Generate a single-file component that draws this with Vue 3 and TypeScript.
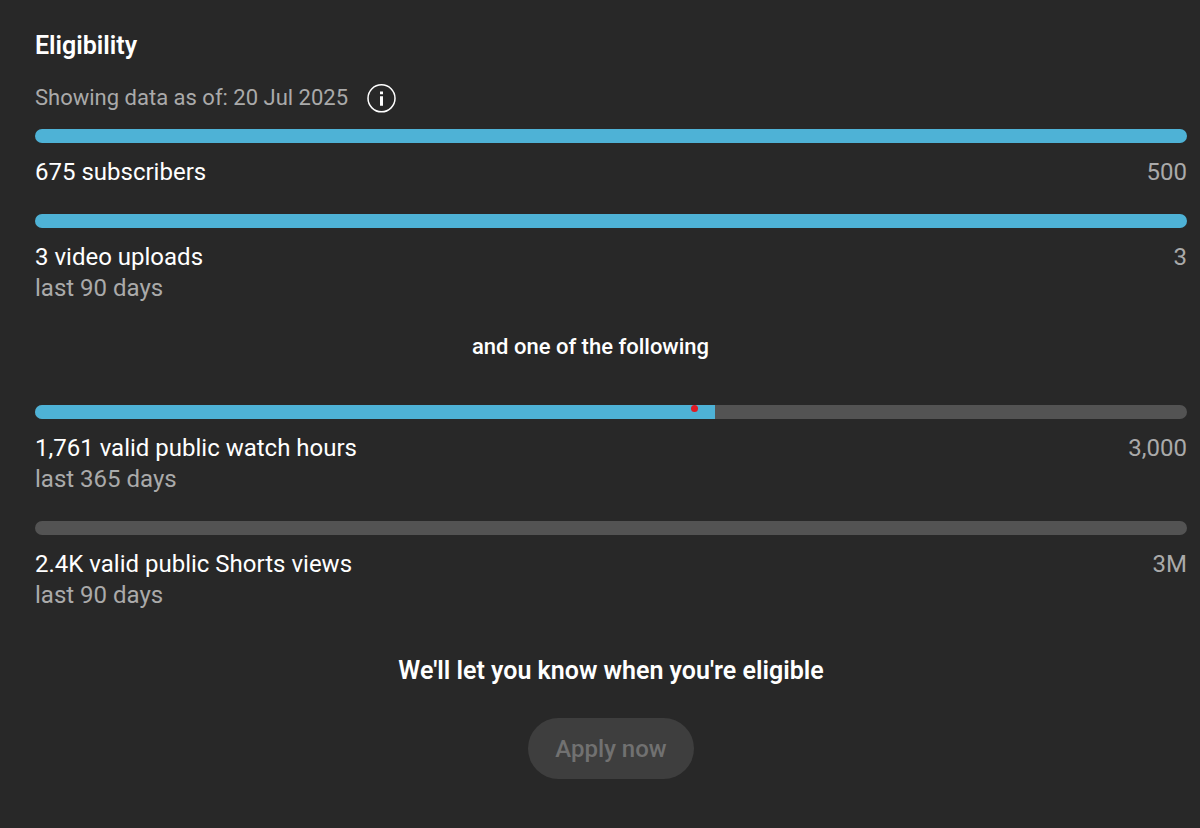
<script setup lang="ts">
interface Goal {
  id: string
  label: string
  period?: string
  target: string
  percent: number
  marker?: number
}

const required: Goal[] = [
  { id: 'subs', label: '675 subscribers', target: '500', percent: 100 },
  { id: 'uploads', label: '3 video uploads', period: 'last 90 days', target: '3', percent: 100 },
]

const alternatives: Goal[] = [
  { id: 'hours', label: '1,761 valid public watch hours', period: 'last 365 days', target: '3,000', percent: 59, marker: 57.2 },
  { id: 'shorts', label: '2.4K valid public Shorts views', period: 'last 90 days', target: '3M', percent: 0 },
]
</script>

<template>
  <main class="panel">
    <h1 class="title">Eligibility</h1>
    <div class="asof">
      <span>Showing data as of: 20 Jul 2025</span>
      <button class="info" type="button" aria-label="More information">
        <svg viewBox="0 0 30 30" width="30" height="30" aria-hidden="true">
          <circle cx="15.5" cy="15.3" r="13.5" fill="none" stroke="#fff" stroke-width="1.5" />
          <path d="M14 8.5h3v2.7h-3zM14 13.3h3v9.4h-3z" fill="#fff" />
        </svg>
      </button>
    </div>

    <section class="goals">
      <div v-for="g in required" :key="g.id" class="goal">
        <div class="track"><div class="fill" :style="{ width: g.percent + '%' }"></div></div>
        <div class="row"><span>{{ g.label }}</span><span class="muted">{{ g.target }}</span></div>
        <div v-if="g.period" class="muted">{{ g.period }}</div>
      </div>
    </section>

    <h2 class="divider">and one of the following</h2>

    <section class="goals">
      <div v-for="g in alternatives" :key="g.id" class="goal">
        <div class="track">
          <div class="fill" :style="{ width: g.percent + '%' }"></div>
          <span v-if="g.marker" class="marker" :style="{ left: g.marker + '%' }"></span>
        </div>
        <div class="row"><span>{{ g.label }}</span><span class="muted">{{ g.target }}</span></div>
        <div v-if="g.period" class="muted">{{ g.period }}</div>
      </div>
    </section>

    <footer class="footer">
      <h2 class="notice">We'll let you know when you're eligible</h2>
      <button class="apply" type="button" disabled>Apply now</button>
    </footer>
  </main>
</template>

<style>
body {
  margin: 0;
  background: #282828;
}
</style>

<style scoped>
.panel {
  box-sizing: border-box;
  min-height: 100vh;
  padding: 30px 13px 48px 35px;
  background: #282828;
  color: #fff;
  font-family: Roboto, 'Liberation Sans', sans-serif;
  font-size: 24px;
  line-height: 31px;
}

.title,
.divider,
.notice {
  margin: 0;
  font-weight: 600;
}

.title,
.notice {
  font-size: 25px;
  line-height: 32px;
}

.asof {
  display: flex;
  align-items: flex-start;
  gap: 18px;
  margin: 20px 0 16px;
  color: #aaa;
  font-size: 22px;
  line-height: 31px;
}

.info {
  width: 30px;
  height: 30px;
  margin-top: 1px;
  padding: 0;
  border: 0;
  background: none;
}

.info svg {
  display: block;
}

.goals {
  display: flex;
  flex-direction: column;
  gap: 26px;
}

.track {
  position: relative;
  height: 14px;
  margin-bottom: 14px;
  border-radius: 7px;
  background: #535353;
  overflow: hidden;
}

.fill {
  height: 100%;
  background: #4eb2d6;
}

.marker {
  position: absolute;
  top: 0;
  width: 7px;
  height: 7px;
  margin-left: -3px;
  border-radius: 50%;
  background: #e01b24;
}

.row {
  display: flex;
  justify-content: space-between;
}

.muted {
  color: #aaa;
}

.divider {
  margin: 27px 41px 43px 0;
  font-size: 22px;
  font-weight: 500;
  text-align: center;
}

.footer {
  display: flex;
  flex-direction: column;
  align-items: center;
  gap: 31px;
  margin-top: 44px;
}

.apply {
  height: 61px;
  padding: 0 27px;
  border: 0;
  border-radius: 31px;
  background: #3e3e3e;
  color: #717171;
  font: 500 24px/30px Roboto, 'Liberation Sans', sans-serif;
}
</style>
